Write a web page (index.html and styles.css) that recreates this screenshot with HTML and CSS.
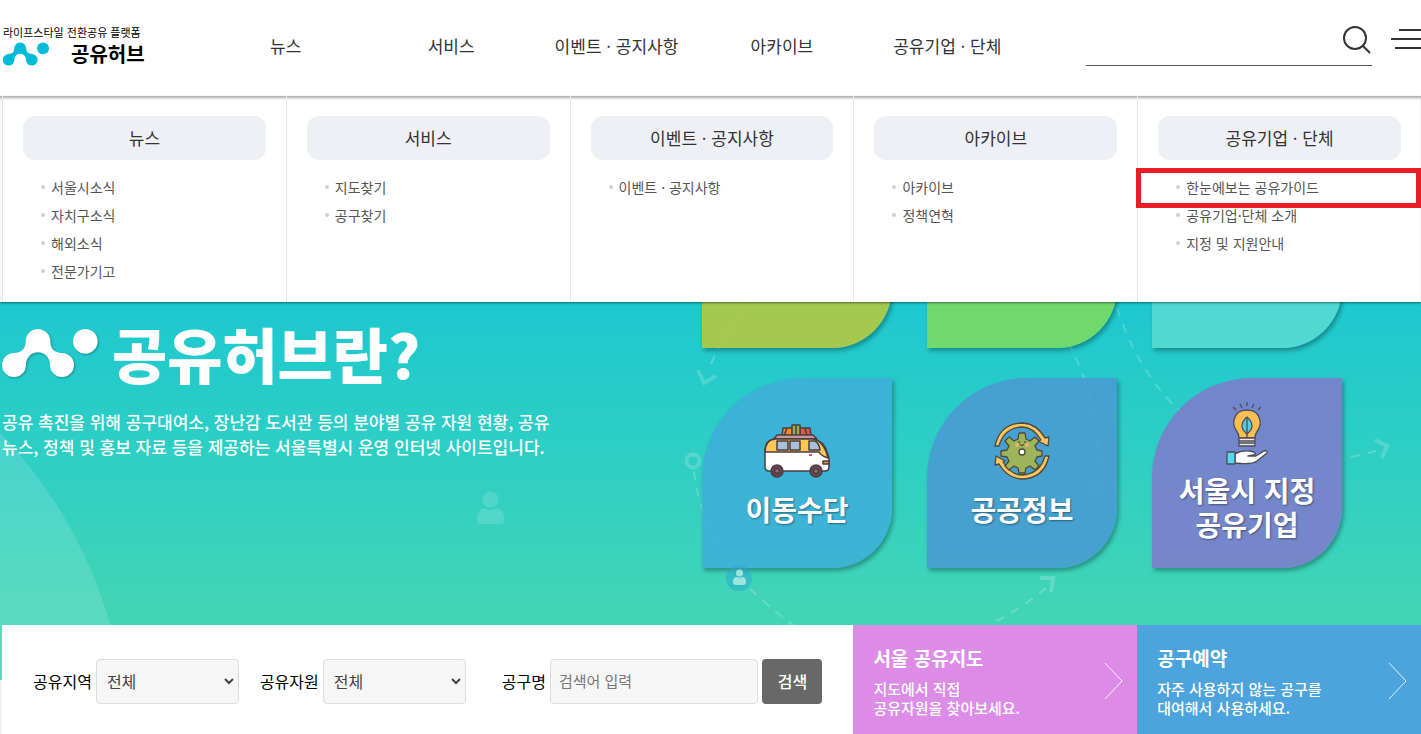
FILE: index.html
```html
<!DOCTYPE html>
<html lang="ko">
<head>
<meta charset="utf-8">
<meta name="viewport" content="width=device-width, initial-scale=1">
<title>공유허브</title>
<link rel="stylesheet" href="styles.css">
</head>
<body>
<svg class="defs" aria-hidden="true">
  <symbol id="mark" viewBox="0 0 139 70">
    <path d="M17 35C29 35 34 28 34 18a18 18 0 0 1 36 0C70 28 75 35 87 35a17.500 17.500 0 1 1-17.500 17.500C69.500 42 62 34 52 34s-17.500 8-17.500 18.500A17.500 17.500 0 1 1 17 35z"/>
    <circle cx="121" cy="18" r="18"/>
  </symbol>
</svg>

<header class="header">
  <a class="logo" href="#">
    <span class="logo-tagline">라이프스타일 전환공유 플랫폼</span>
    <span class="logo-row">
      <svg class="logo-mark" aria-hidden="true"><use href="#mark"/></svg>
      <strong class="logo-name">공유허브</strong>
    </span>
  </a>
  <nav class="nav">
    <a href="#">뉴스</a>
    <a href="#">서비스</a>
    <a href="#">이벤트 · 공지사항</a>
    <a href="#">아카이브</a>
    <a href="#">공유기업 · 단체</a>
  </nav>
  <form class="site-search">
    <input class="site-search-input" type="search" aria-label="통합검색">
    <button class="icon-button" type="button" aria-label="검색">
      <svg width="30" height="30" viewBox="0 0 30 30" fill="none" stroke="#333" stroke-width="2"><circle cx="13" cy="13" r="11"/><path d="M21 21l7 7"/></svg>
    </button>
  </form>
  <button class="menu-button" type="button" aria-label="전체메뉴">
    <svg width="40" height="20" viewBox="0 0 40 20" stroke="#333" stroke-width="2"><path d="M8 1h32M0 10h40M4 19h36"/></svg>
  </button>
</header>

<main class="main">
  <div class="mega">
    <section class="mega-col">
      <h2 class="mega-title">뉴스</h2>
      <ul class="mega-list">
        <li><a href="#">서울시소식</a></li>
        <li><a href="#">자치구소식</a></li>
        <li><a href="#">해외소식</a></li>
        <li><a href="#">전문가기고</a></li>
      </ul>
    </section>
    <section class="mega-col">
      <h2 class="mega-title">서비스</h2>
      <ul class="mega-list">
        <li><a href="#">지도찾기</a></li>
        <li><a href="#">공구찾기</a></li>
      </ul>
    </section>
    <section class="mega-col">
      <h2 class="mega-title">이벤트 · 공지사항</h2>
      <ul class="mega-list">
        <li><a href="#">이벤트 · 공지사항</a></li>
      </ul>
    </section>
    <section class="mega-col">
      <h2 class="mega-title">아카이브</h2>
      <ul class="mega-list">
        <li><a href="#">아카이브</a></li>
        <li><a href="#">정책연혁</a></li>
      </ul>
    </section>
    <section class="mega-col mega-col-marked">
      <h2 class="mega-title">공유기업 · 단체</h2>
      <ul class="mega-list">
        <li><a href="#">한눈에보는 공유가이드</a></li>
        <li><a href="#">공유기업·단체 소개</a></li>
        <li><a href="#">지정 및 지원안내</a></li>
      </ul>
    </section>
  </div>

  <section class="hero">
    <svg class="hero-art" viewBox="0 96 1421 584" preserveAspectRatio="xMidYMid slice" fill="none" aria-hidden="true">
      <defs>
        <linearGradient id="glow" x1="0" y1="0" x2="0" y2="1"><stop offset="0" stop-color="#fff" stop-opacity=".12"/><stop offset="1" stop-color="#fff" stop-opacity=".15"/></linearGradient>
      </defs>
      <circle cx="-332" cy="751" r="460" fill="url(#glow)"/>
      <g fill="#fff" fill-opacity=".14">
        <circle cx="490.500" cy="499.500" r="8"/>
        <path d="M477 519q0-10 8-11 6 4 12 0 7 1 7 11v2q0 3-4 3h-19q-4 0-4-3z"/>
      </g>
      <g stroke="#fff" stroke-opacity=".2" stroke-width="2" stroke-dasharray="9 8">
        <path d="M711 364Q725 332 757 296"/>
        <path d="M694 471Q700 525 734 570M750 589Q768 606 794 626"/>
        <path d="M1046 588Q1022 608 984 628"/>
        <path d="M1040 300Q1104 380 1097 481"/>
        <path d="M1117 308C1160 440 1270 485 1382 449"/>
      </g>
      <g stroke="#fff" stroke-opacity=".18" stroke-width="4">
        <path d="M698 370l6 13 12-7M1040 578h13l-2 14M1375 440l12 6-5 12"/>
        <circle cx="693" cy="461" r="6.500"/>
        <circle cx="1094" cy="489" r="6.500"/>
      </g>
    </svg>

    <div class="hero-text">
      <h1 class="hero-title">
        <svg class="hero-mark" aria-hidden="true"><use href="#mark"/></svg>
        공유허브란?
      </h1>
      <p class="hero-desc">공유 촉진을 위해 공구대여소, 장난감 도서관 등의 분야별 공유 자원 현황, 공유<br>뉴스, 정책 및 홍보 자료 등을 제공하는 서울특별시 운영 인터넷 사이트입니다.</p>
    </div>

    <div class="tiles">
      <div class="tile tile-olive"></div>
      <div class="tile tile-green"></div>
      <div class="tile tile-aqua"></div>
      <a class="tile tile-sky" href="#">
        <svg width="66" height="58" viewBox="0 -2 66 58" stroke="#4a3c40" stroke-width="1.500" stroke-linejoin="round" aria-hidden="true">
          <path d="M19 4h10v8H18z" fill="#ef8b2c"/><path d="M36 4h10l1 8H36z" fill="#e2574c"/><path d="M28 1h8v11h-8z" fill="#9aad4a"/><path d="M20 12l3-8M32 1v11M43 12l-2-8" fill="none"/>
          <path d="M10 15l3-4h36l4 4z" fill="#c99a9b"/>
          <path d="M1 28q0-12 10-13h38q11 2 14 13l2 6v9q0 4-4 4H5q-4 0-4-4z" fill="#fff"/>
          <path d="M1 28q0-12 10-13h38q11 2 15 19-7-2-9-6z" fill="#fdc653"/>
          <path d="M13 17h11v9H13zM26 17h10v9H26zM45 17h6q4 2 5 9H45z" fill="#a9c0dd"/>
          <path d="M45 31h3" stroke="#a03040"/><path d="M59 37h6v3h-6z" fill="#f59233"/>
          <circle cx="13" cy="47" r="6" fill="#6b4550"/><circle cx="52" cy="47" r="6" fill="#6b4550"/><circle cx="13" cy="47" r="2.500" fill="#916d76"/><circle cx="52" cy="47" r="2.500" fill="#916d76"/>
        </svg>
        <span class="tile-name">이동수단</span>
      </a>
      <a class="tile tile-blue" href="#">
        <svg width="56" height="58" viewBox="0 0 56 58" stroke="#514838" stroke-width="1.300" stroke-linejoin="round" aria-hidden="true">
          <path d="M1 24Q6 1 29 1 43 2 51 16l4-1-1 9-10-5 3-1Q39 5 28 5 10 6 5 24z" fill="#fbc560"/>
          <path d="M55 34Q50 57 27 57 13 56 5 42l-4 1 1-9 9 5-2 1Q17 53 28 53 46 52 51 34z" fill="#fbc560"/>
          <path d="M25 11h6l1 6 4 2 5-4 4 4-4 5 2 4 5 1v5l-5 1-2 4 4 5-4 4-5-4-4 2-1 5h-6l-1-5-4-2-5 4-4-4 4-5-2-4-6-1v-5l6-1 2-4-4-5 4-4 5 4 4-2z" fill="#9db558"/>
          <circle cx="23" cy="23" r="2" fill="#e6b37e" stroke="none"/><circle cx="33" cy="23" r="2" fill="#e6b37e" stroke="none"/>
          <path d="M25 19v2M31 19v2M26 22q2 3 4 0" fill="none"/>
          <circle cx="28" cy="30" r="3" fill="#fff"/>
        </svg>
        <span class="tile-name">공공정보</span>
      </a>
      <a class="tile tile-violet" href="#">
        <svg width="42" height="64" viewBox="0 0 42 64" stroke="#4c4c58" stroke-width="1.300" stroke-linejoin="round" aria-hidden="true">
          <path d="M7 6l3 3M14 3l2 4M21 1v4M28 3l-2 4M35 6l-3 3" fill="none"/>
          <path d="M13 37q0-4-3-8Q7 24 8 19 10 9 21 9t13 10q1 5-2 10-3 4-3 8z" fill="#f8bd53"/>
          <path d="M21 16q-10 9 0 17 10-8 0-17z" fill="#5acbe2"/><path d="M21 16v21" fill="none"/>
          <path d="M13 37h16v8H13z" fill="#eee6dc"/><path d="M13 40h16M13 42h16" fill="none"/>
          <path d="M9 53q8-5 19-2 3 2-1 3l-5 1h8l8-5q4-1 3 2l-10 8q-5 4-22 2z" fill="#fff"/>
          <path d="M1 51h8v12H1z" fill="#5cd5f1"/>
        </svg>
        <span class="tile-name">서울시 지정<br>공유기업</span>
      </a>
    </div>

    <svg class="hero-art" viewBox="0 96 1421 584" preserveAspectRatio="xMidYMid slice" aria-hidden="true">
      <circle cx="739" cy="578" r="13" fill="#2c9fd1" fill-opacity=".45"/>
      <g fill="#b6f0e6" fill-opacity=".8"><circle cx="739.500" cy="573" r="3.500"/><path d="M733 582q0-5 4-5 3 1 5 0 4 0 4 5 0 3-3 3h-7q-3 0-3-3z"/></g>
    </svg>
  </section>

  <section class="quick">
    <form class="finder">
      <div class="field">
        <label for="area">공유지역</label>
        <div class="select-wrap">
          <select id="area"><option>전체</option></select>
          <svg class="caret" width="10" height="7" viewBox="0 0 10 7" fill="none" stroke="#444" stroke-width="2" aria-hidden="true"><path d="M1 1l4 4 4-4"/></svg>
        </div>
      </div>
      <div class="field">
        <label for="resource">공유자원</label>
        <div class="select-wrap">
          <select id="resource"><option>전체</option></select>
          <svg class="caret" width="10" height="7" viewBox="0 0 10 7" fill="none" stroke="#444" stroke-width="2" aria-hidden="true"><path d="M1 1l4 4 4-4"/></svg>
        </div>
      </div>
      <div class="field field-keyword">
        <label for="tool">공구명</label>
        <input id="tool" type="text" placeholder="검색어 입력">
        <button class="submit" type="button">검색</button>
      </div>
    </form>
    <a class="banner banner-pink" href="#">
      <span>
        <strong class="banner-title">서울 공유지도</strong>
        <span class="banner-desc">지도에서 직접<br>공유자원을 찾아보세요.</span>
      </span>
      <svg width="19" height="38" viewBox="0 0 19 38" fill="none" stroke="#fff" stroke-opacity=".85" aria-hidden="true"><path d="M1 1l17 18L1 37"/></svg>
    </a>
    <a class="banner banner-blue" href="#">
      <span>
        <strong class="banner-title">공구예약</strong>
        <span class="banner-desc">자주 사용하지 않는 공구를<br>대여해서 사용하세요.</span>
      </span>
      <svg width="19" height="38" viewBox="0 0 19 38" fill="none" stroke="#fff" stroke-opacity=".85" aria-hidden="true"><path d="M1 1l17 18L1 37"/></svg>
    </a>
  </section>
</main>
</body>
</html>
```

FILE: styles.css
```css
*,
*::before,
*::after {
  box-sizing: border-box;
}

body {
  margin: 0;
  overflow-x: hidden;
  background: #eff1f6;
  color: #333;
  font-family: "Noto Sans CJK KR", "Noto Sans", sans-serif;
  font-size: 16px;
}

a {
  color: inherit;
  text-decoration: none;
}

button,
input,
select {
  font: inherit;
}

.defs {
  display: block;
  width: 0;
  height: 0;
}

.header {
  display: flex;
  align-items: center;
  height: 96px;
  padding: 0 0 5px 3px;
  overflow: hidden;
  background: #fff;
}

.logo {
  flex: none;
  width: 200px;
  color: #000;
}

.logo-tagline {
  display: block;
  font-size: 11px;
  line-height: 16px;
}

.logo-row {
  display: flex;
  align-items: center;
  gap: 22px;
}

.logo-mark {
  width: 46px;
  height: 24px;
  fill: #00bcd8;
}

.logo-name {
  font-size: 20px;
  font-weight: 700;
  line-height: 28px;
}

.nav {
  display: grid;
  flex: 1;
  grid-template-columns: repeat(5, 1fr);
  font-size: 17px;
  line-height: 24px;
  text-align: center;
  white-space: nowrap;
}

.site-search {
  display: flex;
  flex: none;
  align-items: center;
  width: 286px;
  height: 40px;
  margin: 0 19px 0 56px;
  padding-bottom: 10px;
  border-bottom: 1px solid #555;
}

.site-search-input {
  flex: 1;
  min-width: 0;
  border: 0;
  outline: 0;
  background: none;
}

.icon-button,
.menu-button {
  display: block;
  padding: 0;
  border: 0;
  background: none;
}

.icon-button svg,
.menu-button svg {
  display: block;
}

.menu-button {
  flex: none;
  width: 30px;
  margin-bottom: 13px;
  overflow: hidden;
}

.main {
  position: relative;
}

.mega {
  position: absolute;
  z-index: 2;
  top: 0;
  right: 0;
  left: 0;
  display: grid;
  grid-template-columns: repeat(5, 1fr);
  padding-left: 2px;
  background: #fff;
  box-shadow: inset 0 3px 3px -1px #aaa, 0 1px 2px rgba(0, 0, 0, .5);
}

.mega-col {
  padding: 20px 20px 17px;
  border-left: 1px solid #e6e6e9;
}

.mega-title {
  margin: 0 0 13px;
  border-radius: 12px;
  background: #eff0f5;
  font-size: 17px;
  font-weight: 400;
  line-height: 44px;
  text-align: center;
}

.mega-list {
  margin: 0;
  padding: 0 0 0 18px;
  color: #555;
  font-size: 14px;
  line-height: 28px;
  list-style: none;
}

.mega-list li {
  display: flex;
  align-items: center;
  gap: 6px;
}

.mega-list li::before {
  width: 4px;
  height: 4px;
  border-radius: 50%;
  background: #d0d0d4;
  content: "";
}

.mega-col-marked {
  position: relative;
}

.mega-col-marked::after {
  position: absolute;
  top: 72px;
  right: 0;
  left: -2px;
  height: 40px;
  border: 5px solid #e91d25;
  content: "";
}

.hero {
  position: relative;
  display: flex;
  align-items: flex-start;
  justify-content: space-between;
  padding: 62px 79px 112px 2px;
  overflow: hidden;
  background: linear-gradient(#1cc8d0 35%, #41d5b7 88%);
}

.hero-art {
  position: absolute;
  top: 0;
  left: 0;
  width: 100%;
  height: 100%;
  pointer-events: none;
}

.hero-text {
  position: relative;
  padding-top: 165px;
  color: #fff;
}

.hero-title {
  display: flex;
  align-items: center;
  gap: 14px;
  margin: 0 0 26px;
  font-size: 60px;
  font-weight: 900;
  line-height: 60px;
}

.hero-mark {
  width: 96px;
  height: 48px;
  fill: #fff;
  filter: drop-shadow(1px 1px 1px rgba(0, 0, 0, .3));
}

.hero-desc {
  margin: 0;
  font-size: 17px;
  font-weight: 500;
  line-height: 25px;
}

.tiles {
  position: relative;
  display: grid;
  flex: none;
  grid-template-columns: repeat(3, 190px);
  gap: 30px 35px;
}

.tile {
  display: flex;
  flex-direction: column;
  align-items: center;
  justify-content: center;
  gap: 12px;
  height: 190px;
  padding-top: 2px;
  border-radius: 100px 0 60px;
  box-shadow: 2px 3px 4px rgba(0, 0, 0, .3);
  color: #fff;
}

.tile-olive { background: rgba(178, 201, 64, .9); }
.tile-green { background: rgba(121, 218, 100, .9); }
.tile-aqua { background: rgba(85, 218, 210, .9); }
.tile-sky { background: rgba(62, 175, 215, .9); }
.tile-blue { background: rgba(73, 155, 210, .9); }

.tile-violet {
  gap: 8px;
  padding: 0 0 4px;
  background: rgba(124, 126, 203, .9);
}

.tile-name {
  font-size: 28px;
  font-weight: 700;
  line-height: 34px;
  text-align: center;
  text-shadow: 1px 1px 2px rgba(0, 0, 0, .4);
}

.quick {
  position: relative;
  display: grid;
  grid-template-columns: 3fr 1fr 1fr;
  min-height: 109px;
  margin: -55px 0 0 2px;
}

.finder {
  display: flex;
  align-items: center;
  gap: 21px;
  padding: 4px 31px 0;
  background: #fff;
  color: #000;
}

.field {
  display: flex;
  align-items: center;
  gap: 4px;
  white-space: nowrap;
}

.field-keyword {
  flex: 1;
  margin-left: 15px;
}

.field label {
  padding-bottom: 2px;
}

.select-wrap {
  position: relative;
}

.field select,
.field input {
  height: 45px;
  border: 1px solid #ddd;
  border-radius: 4px;
  background: #f6f6f6;
  color: #444;
}

.field select {
  width: 143px;
  padding: 0 10px 2px;
  appearance: none;
}

.field input {
  flex: 1;
  width: 100px;
  padding: 0 8px 2px;
  font-size: 15px;
}

.field input::placeholder {
  color: #777;
}

.caret {
  position: absolute;
  top: 19px;
  right: 5px;
  pointer-events: none;
}

.submit {
  width: 60px;
  height: 45px;
  padding: 0 0 2px;
  border: 0;
  border-radius: 4px;
  background: #686868;
  color: #fff;
  font-weight: 500;
}

.banner {
  display: flex;
  align-items: center;
  justify-content: space-between;
  padding: 2px 14px 0 20px;
  color: #fff;
}

.banner-pink { background: #dc8ce7; }
.banner-blue { background: #4da3db; }

.banner-title {
  display: block;
  margin-bottom: 8px;
  font-size: 19px;
  font-weight: 700;
  line-height: 26px;
}

.banner-desc {
  display: block;
  font-size: 15px;
  font-weight: 500;
  line-height: 19px;
}
```
